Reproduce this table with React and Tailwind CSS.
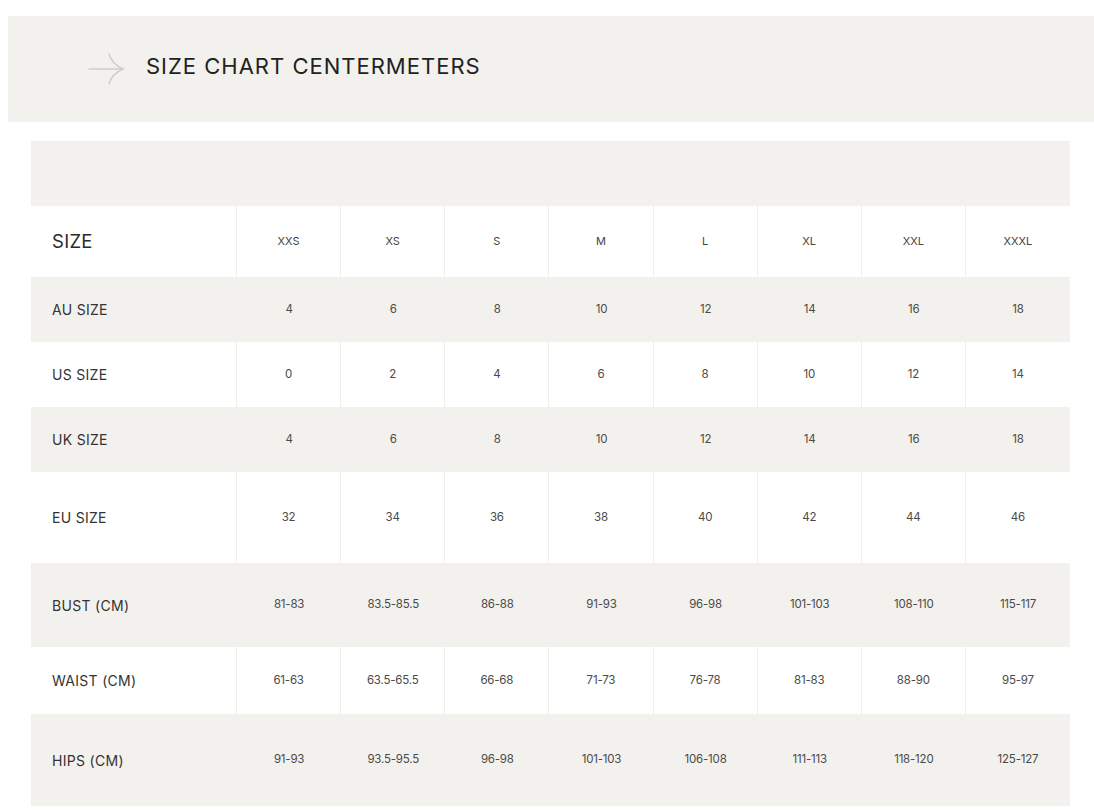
import React from "react";

const cols = ["XXS", "XS", "S", "M", "L", "XL", "XXL", "XXXL"];
const rows = [
  { label: "AU SIZE", vals: ["4", "6", "8", "10", "12", "14", "16", "18"], h: "h-[65px]", gray: true },
  { label: "US SIZE", vals: ["0", "2", "4", "6", "8", "10", "12", "14"], h: "h-[65px]", gray: false },
  { label: "UK SIZE", vals: ["4", "6", "8", "10", "12", "14", "16", "18"], h: "h-[65px]", gray: true },
  { label: "EU SIZE", vals: ["32", "34", "36", "38", "40", "42", "44", "46"], h: "h-[91px]", gray: false },
  { label: "BUST (CM)", vals: ["81-83", "83.5-85.5", "86-88", "91-93", "96-98", "101-103", "108-110", "115-117"], h: "h-[84px]", gray: true },
  { label: "WAIST (CM)", vals: ["61-63", "63.5-65.5", "66-68", "71-73", "76-78", "81-83", "88-90", "95-97"], h: "h-[67px]", gray: false },
  { label: "HIPS (CM)", vals: ["91-93", "93.5-95.5", "96-98", "101-103", "106-108", "111-113", "118-120", "125-127"], h: "h-[92px]", gray: true },
];

function Arrow() {
  return (
    <svg width="38" height="34" viewBox="0 0 38 34" fill="none">
      <path d="M1 17 H35" stroke="#cfcdc8" strokeWidth="1.4" strokeLinecap="round" />
      <path d="M21 2 C23 9 28 14 35 17 C28 20 23 25 21 32" stroke="#cfcdc8" strokeWidth="1.4" strokeLinecap="round" fill="none" />
    </svg>
  );
}

export default function App() {
  return (
    <div className="min-h-[812px] bg-white pt-4 font-['Inter',sans-serif] text-[#2b2b2b]">
      <div className="ml-2 flex h-[106px] items-center bg-[#f3f1ed] pl-[80px]">
        <Arrow />
        <h1 className="ml-[20px] mb-[5px] text-[22px] font-normal tracking-[1px] text-[#222]">
          SIZE CHART CENTERMETERS
        </h1>
      </div>

      <div className="ml-[31px] mt-[19px] w-[1039px]">
        <div className="h-[65px] bg-[#f3f1ed]" />
        <div className="grid h-[71px] grid-cols-[206px_repeat(8,1fr)] bg-white">
          <div className="flex items-center border-r border-[#f1efeb] pl-[21px] text-[18.5px] tracking-[0.3px] text-[#2b2b2b]">SIZE</div>
          {cols.map((c, i) => (
            <div
              key={c}
              className={`flex items-center justify-center text-[11px] text-[#444] ${i < 7 ? "border-r border-[#f1efeb]" : ""}`}
            >
              {c}
            </div>
          ))}
        </div>
        {rows.map((r) => (
          <div
            key={r.label}
            className={`grid grid-cols-[206px_repeat(8,1fr)] ${r.h} ${r.gray ? "bg-[#f3f1ed]" : "bg-white"}`}
          >
            <div className={`flex items-center pl-[21px] text-[14px] tracking-[0.3px] text-[#333] ${r.gray ? "" : "border-r border-[#f1efeb]"}`}>
              {r.label}
            </div>
            {r.vals.map((v, i) => (
              <div
                key={i}
                className={`flex items-center justify-center text-[11.5px] tracking-[-0.2px] text-[#4a4a4a] ${!r.gray && i < 7 ? "border-r border-[#f1efeb]" : ""}`}
              >
                {v}
              </div>
            ))}
          </div>
        ))}
      </div>
    </div>
  );
}
